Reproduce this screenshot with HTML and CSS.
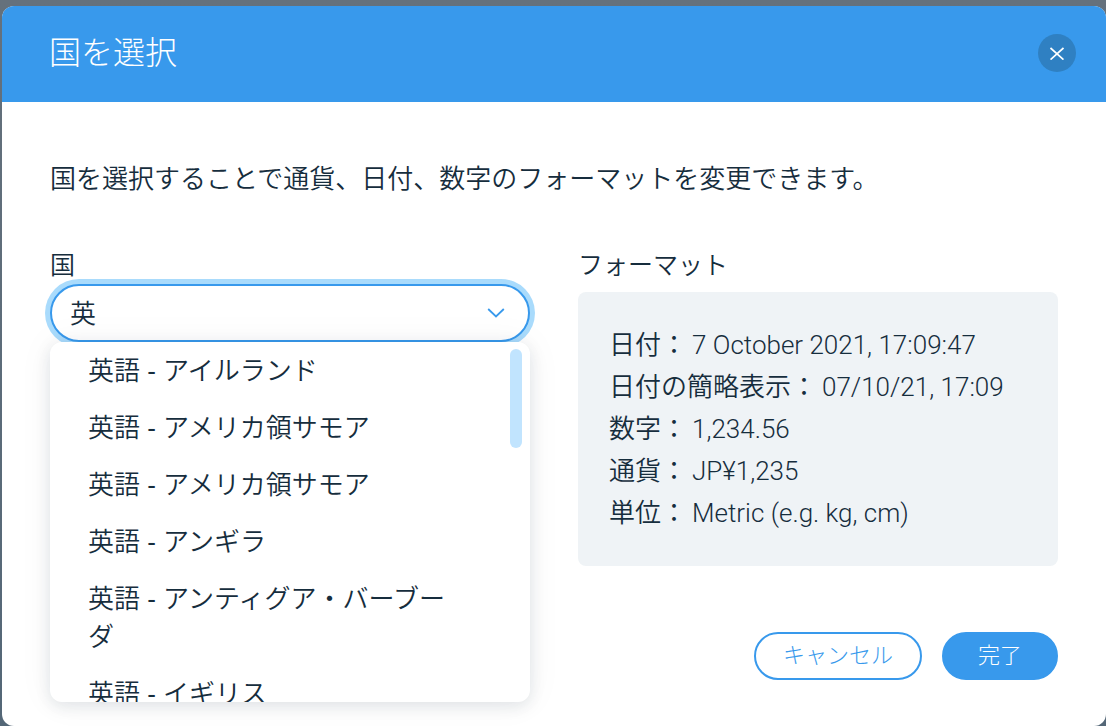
FILE: index.html
```html
<!DOCTYPE html>
<html lang="ja">
<head>
<meta charset="utf-8">
<meta name="viewport" content="width=device-width, initial-scale=1">
<title>国を選択</title>
<link rel="stylesheet" href="styles.css">
</head>
<body>
<div class="modal" role="dialog" aria-labelledby="modal-title">
  <header class="modal-header">
    <h1 class="modal-title" id="modal-title">国を選択</h1>
    <button class="close-button" type="button" aria-label="閉じる">
      <svg width="14" height="14" viewBox="0 0 14 14" fill="none" stroke="currentColor" stroke-width="1.7" aria-hidden="true"><path d="M.5 2 13.5 13.6M13.5 2 .5 13.6"/></svg>
    </button>
  </header>
  <main class="modal-body">
    <p class="description">国を選択することで通貨、日付、数字のフォーマットを変更できます。</p>
    <div class="columns">
      <section class="column">
        <label class="label" for="country">国</label>
        <div class="combobox">
          <input class="combobox-input" id="country" type="text" value="英" role="combobox" aria-expanded="true" aria-controls="country-list" autocomplete="off">
          <svg class="chevron" width="18" height="10" viewBox="0 0 18 10" fill="none" stroke="currentColor" stroke-width="1.8" aria-hidden="true"><path d="M1.2 1 9 8.4 16.8 1"/></svg>
          <div class="dropdown">
            <ul class="options" id="country-list" role="listbox">
              <li class="option" role="option">英語 - アイルランド</li>
              <li class="option" role="option">英語 - アメリカ領サモア</li>
              <li class="option" role="option">英語 - アメリカ領サモア</li>
              <li class="option" role="option">英語 - アンギラ</li>
              <li class="option" role="option">英語 - アンティグア・バーブーダ</li>
              <li class="option" role="option">英語 - イギリス</li>
            </ul>
            <div class="scroll-thumb"></div>
          </div>
        </div>
      </section>
      <section class="column">
        <h2 class="label">フォーマット</h2>
        <dl class="format-card">
          <div class="format-row"><dt>日付：</dt><dd>7 October 2021, 17:09:47</dd></div>
          <div class="format-row"><dt>日付の簡略表示：</dt><dd>07/10/21, 17:09</dd></div>
          <div class="format-row"><dt>数字：</dt><dd>1,234.56</dd></div>
          <div class="format-row"><dt>通貨：</dt><dd>JP¥1,235</dd></div>
          <div class="format-row"><dt>単位：</dt><dd>Metric (e.g. kg, cm)</dd></div>
        </dl>
      </section>
    </div>
    <footer class="actions">
      <button class="button button-secondary" type="button">キャンセル</button>
      <button class="button button-primary" type="button">完了</button>
    </footer>
  </main>
</div>
</body>
</html>
```
FILE: styles.css
```css
* {
  box-sizing: border-box;
}

body {
  margin: 0;
  padding: 6px 0 0 2px;
  background: linear-gradient(#65717c, #546777);
  color: #162d3d;
  font-family: "Liberation Sans", "Noto Sans CJK JP", sans-serif;
  font-size: 26px;
  font-weight: 350;
  line-height: 38px;
}

.modal {
  min-height: calc(100vh - 6px);
  overflow: hidden;
  border-radius: 12px;
  background: #fff;
}

.modal-header {
  display: flex;
  align-items: center;
  justify-content: space-between;
  height: 96px;
  padding: 0 30px 2px 47px;
  background: #3899ec;
  color: #fff;
}

.modal-title {
  margin: 0;
  font-size: 32px;
  font-weight: 300;
  line-height: 48px;
}

.close-button {
  display: grid;
  place-items: center;
  width: 38px;
  height: 38px;
  padding: 0;
  border: 0;
  border-radius: 50%;
  background: #2f80c2;
  color: #fff;
}

.modal-body {
  padding: 58px 48px 46px;
}

.description {
  margin: 0 0 48px;
}

.columns {
  display: grid;
  grid-template-columns: 1fr 1fr;
  gap: 48px;
}

.label {
  display: block;
  margin: 0;
  font-size: 25px;
  font-weight: 350;
}

.combobox {
  position: relative;
}

.combobox-input {
  display: block;
  width: 100%;
  height: 58px;
  padding: 0 60px 3px 18px;
  border: 2px solid #3899ec;
  border-radius: 29px;
  outline: 0;
  background: #fff;
  box-shadow: 0 0 0 5px #a9dbfc;
  color: inherit;
  font: inherit;
}

.chevron {
  position: absolute;
  top: 24px;
  right: 25px;
  color: #3899ec;
}

.dropdown {
  position: absolute;
  top: 100%;
  left: 0;
  right: 0;
  height: 360px;
  overflow: hidden;
  border-radius: 12px;
  background: #fff;
  box-shadow: 0 4px 16px rgba(22, 45, 61, 0.11), 0 0 36px rgba(22, 45, 61, 0.05);
}

.options {
  margin: 0;
  padding: 0;
  list-style: none;
}

.option {
  padding: 10px 78px 9px 38px;
}

.scroll-thumb {
  position: absolute;
  top: 7px;
  right: 8px;
  width: 12px;
  height: 99px;
  border-radius: 6px;
  background: #c1e4fe;
}

.format-card {
  margin: 8px 0 0;
  padding: 32px 31px;
  border-radius: 8px;
  background: #eff3f6;
}

.format-row {
  display: flex;
  gap: 5px;
  line-height: 42px;
}

.format-row dd {
  margin: 0;
  font-family: Roboto, "Liberation Sans", sans-serif;
  font-weight: 300;
}

.actions {
  display: flex;
  justify-content: flex-end;
  gap: 20px;
  margin-top: 66px;
}

.button {
  height: 48px;
  padding: 0 27px;
  border: 2px solid #3899ec;
  border-radius: 24px;
  font: inherit;
  font-size: 22px;
  font-weight: 300;
}

.button-secondary {
  background: #fff;
  color: #3899ec;
}

.button-primary {
  padding: 0 34px;
  background: #3899ec;
  color: #fff;
}
```
